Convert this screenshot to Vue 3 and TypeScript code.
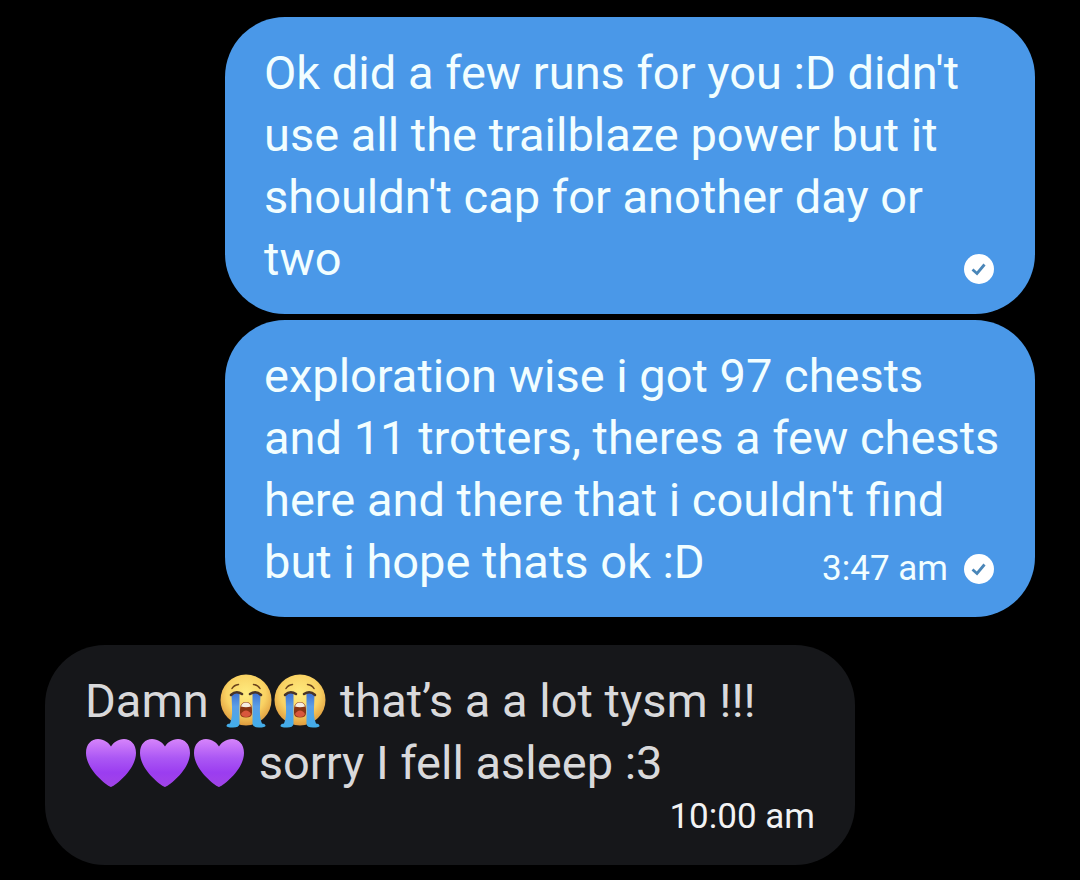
<script setup lang="ts">
type Part = { kind: 'text'; value: string } | { kind: 'sob' | 'heart' }

interface Message {
  id: number
  mine: boolean
  lines: Part[][]
  time?: string
  startsGroup?: boolean
}

const text = (value: string): Part => ({ kind: 'text', value })

const messages: Message[] = [
  {
    id: 1,
    mine: true,
    lines: [
      [text("Ok did a few runs for you :D didn't")],
      [text('use all the trailblaze power but it')],
      [text("shouldn't cap for another day or")],
      [text('two')],
    ],
  },
  {
    id: 2,
    mine: true,
    time: '3:47 am',
    lines: [
      [text('exploration wise i got 97 chests')],
      [text('and 11 trotters, theres a few chests')],
      [text("here and there that i couldn't find")],
      [text('but i hope thats ok :D')],
    ],
  },
  {
    id: 3,
    mine: false,
    startsGroup: true,
    time: '10:00 am',
    lines: [
      [text('Damn '), { kind: 'sob' }, { kind: 'sob' }, text(' that’s a a lot tysm !!!')],
      [{ kind: 'heart' }, { kind: 'heart' }, { kind: 'heart' }, text(' sorry I fell asleep :3')],
    ],
  },
]
</script>

<template>
  <main class="chat">
    <svg class="defs" width="0" height="0" aria-hidden="true">
      <defs>
        <radialGradient id="face" cx="0.5" cy="0.38" r="0.64">
          <stop offset="0" stop-color="#ffec80" />
          <stop offset="0.6" stop-color="#f9d263" />
          <stop offset="1" stop-color="#dc963a" />
        </radialGradient>
        <linearGradient id="tear" x1="0" y1="0" x2="0" y2="1">
          <stop offset="0" stop-color="#3d6fd0" />
          <stop offset="0.4" stop-color="#5b9fe6" />
          <stop offset="1" stop-color="#41aeea" />
        </linearGradient>
        <linearGradient id="heart" x1="0" y1="0" x2="0" y2="1">
          <stop offset="0" stop-color="#d684fb" />
          <stop offset="0.4" stop-color="#ab57f4" />
          <stop offset="0.7" stop-color="#9b3df0" />
          <stop offset="1" stop-color="#a044e6" />
        </linearGradient>
      </defs>
    </svg>

    <article
      v-for="message in messages"
      :key="message.id"
      class="bubble"
      :class="{ mine: message.mine, theirs: !message.mine, spaced: message.startsGroup }"
    >
      <p class="body">
        <span v-for="(line, i) in message.lines" :key="i" class="line">
          <template v-for="(part, j) in line" :key="j">
            <template v-if="part.kind === 'text'">{{ part.value }}</template>
            <svg v-else-if="part.kind === 'sob'" class="emoji" viewBox="1 0 54 54" role="img" aria-label="Loudly crying face">
              <circle cx="27" cy="26" r="25.500" fill="url(#face)" />
              <path d="M13 14.500Q15 11 19.500 10.500M34.500 10.500Q39 11 41 14.500" fill="none" stroke="#6b431b" stroke-width="1.500" stroke-linecap="round" />
              <path d="M12.500 19.500Q16 17.500 20.500 19.500V50Q20 53.500 14 53.500Q7 53.500 7.500 51.500Q8 49.500 11 49.500Q13.500 44 13 34Z" fill="url(#tear)" />
              <path d="M41.500 19.500Q38 17.500 33.500 19.500V50Q34 53.500 40 53.500Q47 53.500 46.500 51.500Q46 49.500 43 49.500Q40.500 44 41 34Z" fill="url(#tear)" />
              <path d="M12 21Q17 16 23 20M31 20Q37 16 42 21" fill="none" stroke="#4a3527" stroke-width="2.500" stroke-linecap="round" />
              <path d="M21 36C21 31 23 28 27 28S33 31 33 36V39C33 42 31 43.500 27 43.500S21 42 21 39Z" fill="#8b3513" />
              <path d="M22 32.500Q23 28.500 27 28.500T32 32.500Q27 34 22 32.500Z" fill="#f6eee1" />
              <path d="M22 40Q24 36.500 27 36.500T32 40Q31 43 27 43T22 40Z" fill="#d9573c" />
            </svg>
            <svg v-else class="emoji" viewBox="1 0 54 54" role="img" aria-label="Purple heart">
              <path d="M27 51C24 50.500 2 34 2 17C2 8 7.500 3 14 3C20 3 25 7 27 10.500C29 7 34 3 40 3C46.500 3 52 8 52 17C52 34 30 50.500 27 51Z" fill="url(#heart)" />
            </svg>
          </template>
        </span>
      </p>
      <footer class="meta">
        <time v-if="message.time">{{ message.time }}</time>
        <svg v-if="message.mine" class="sent" viewBox="0 0 30 30" role="img" aria-label="Sent">
          <circle cx="15" cy="15" r="15" fill="#fff" />
          <path d="M8.500 15.500L13 19.500L20.500 10.500" fill="none" stroke="#4a86b8" stroke-width="2.800" />
        </svg>
      </footer>
    </article>
  </main>
</template>

<style>
body {
  margin: 0;
  background: #000;
}
</style>

<style scoped>
.chat {
  display: flex;
  flex-direction: column;
  gap: 6px;
  padding: 17px 45px 15px;
  font-family: Roboto, "Noto Sans", sans-serif;
}

.defs {
  position: absolute;
}

.bubble {
  box-sizing: border-box;
  width: 82%;
  max-width: 810px;
  padding: 25px 40px 24px;
  border-radius: 60px;
}

.mine {
  display: grid;
  grid-template-columns: minmax(0, 1fr);
  align-self: flex-end;
  align-items: end;
  padding-right: 41px;
  padding-left: 39px;
  background: #4a98e8;
  color: #f2feff;
}

.theirs {
  align-self: flex-start;
  background: #16171a;
  color: #d9d9db;
}

.spaced {
  margin-top: 22px;
}

.body {
  margin: 0;
  font-size: 47px;
  line-height: 62px;
}

.mine .body,
.mine .meta {
  grid-area: 1 / 1;
}

.line {
  display: block;
  white-space: pre;
}

.emoji {
  width: 54px;
  height: 54px;
  vertical-align: -11px;
}

.meta {
  display: flex;
  justify-content: flex-end;
  align-items: center;
  gap: 16px;
  padding-bottom: 1px;
  font-size: 35px;
  line-height: 46px;
}

.theirs .meta {
  color: #f2f2f3;
}

.sent {
  width: 30px;
  height: 30px;
  margin: 5px 0;
}
</style>
